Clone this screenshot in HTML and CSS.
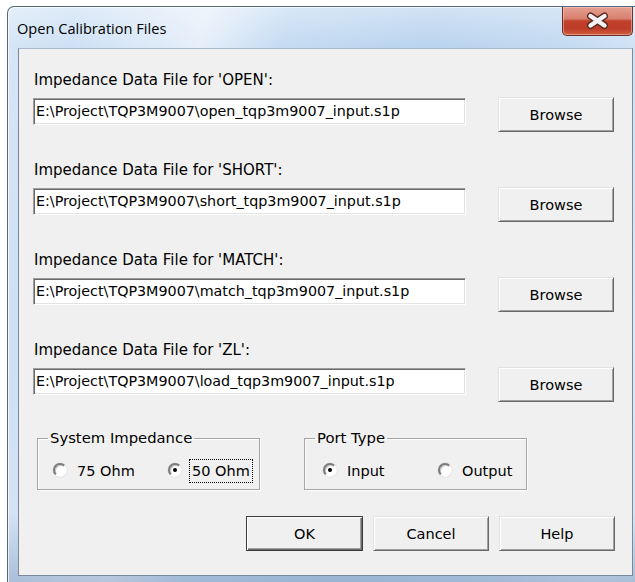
FILE: index.html
```html
<!DOCTYPE html>
<html lang="en">
<head>
<meta charset="utf-8">
<title>Open Calibration Files</title>
<link rel="stylesheet" href="styles.css">
</head>
<body>
<div class="window">
  <div class="titlebar">
    <span class="title">Open Calibration Files</span>
    <button class="close" type="button" aria-label="Close">
      <svg width="71" height="29" viewBox="0 0 71 29">
        <path d="M28.5 10 L42.5 19.5 M42.5 10 L28.5 19.5" stroke="#5a2a24" stroke-width="7" stroke-linecap="round" fill="none"/>
        <path d="M28.5 10 L42.5 19.5 M42.5 10 L28.5 19.5" stroke="#f2f2f2" stroke-width="4.4" stroke-linecap="round" fill="none"/>
      </svg>
    </button>
  </div>

  <div class="client">
    <div class="files">
      <div class="file-row">
        <div class="file-label">Impedance Data File for 'OPEN':</div>
        <div class="file-controls">
          <div class="textbox">E:\Project\TQP3M9007\open_tqp3m9007_input.s1p</div>
          <button class="btn btn-browse" type="button">Browse</button>
        </div>
      </div>
      <div class="file-row">
        <div class="file-label">Impedance Data File for 'SHORT':</div>
        <div class="file-controls">
          <div class="textbox">E:\Project\TQP3M9007\short_tqp3m9007_input.s1p</div>
          <button class="btn btn-browse" type="button">Browse</button>
        </div>
      </div>
      <div class="file-row">
        <div class="file-label">Impedance Data File for 'MATCH':</div>
        <div class="file-controls">
          <div class="textbox">E:\Project\TQP3M9007\match_tqp3m9007_input.s1p</div>
          <button class="btn btn-browse" type="button">Browse</button>
        </div>
      </div>
      <div class="file-row">
        <div class="file-label">Impedance Data File for 'ZL':</div>
        <div class="file-controls">
          <div class="textbox">E:\Project\TQP3M9007\load_tqp3m9007_input.s1p</div>
          <button class="btn btn-browse" type="button">Browse</button>
        </div>
      </div>
    </div>

    <div class="groups">
      <fieldset class="group group-impedance">
        <legend>System Impedance</legend>
        <div class="options">
          <div class="option"><span class="radio"></span><span class="option-text">75 Ohm</span></div>
          <div class="option"><span class="radio checked"></span><span class="option-text focused">50 Ohm</span></div>
        </div>
      </fieldset>
      <fieldset class="group group-port">
        <legend>Port Type</legend>
        <div class="options">
          <div class="option"><span class="radio checked"></span><span class="option-text">Input</span></div>
          <div class="option"><span class="radio"></span><span class="option-text">Output</span></div>
        </div>
      </fieldset>
    </div>

    <div class="actions">
      <button class="btn btn-default" type="button">OK</button>
      <button class="btn btn-action" type="button">Cancel</button>
      <button class="btn btn-action" type="button">Help</button>
    </div>
  </div>
</div>
</body>
</html>
```
FILE: styles.css
```css
html, body {
  margin: 0;
  padding: 0;
}

body {
  width: 635px;
  height: 582px;
  overflow: hidden;
  background: #ffffff;
  font-family: "DejaVu Sans", "Liberation Sans", sans-serif;
  color: #000;
}

/* Aero-style window frame */
.window {
  box-sizing: border-box;
  width: 640px;
  height: 576px;
  margin: 6px 0 0 7px;
  border: 1px solid #56687d;
  border-bottom: 0;
  border-radius: 7px 7px 0 0;
  display: flex;
  flex-direction: column;
  background:
    linear-gradient(180deg, rgba(255,255,255,0.35) 0px, rgba(255,255,255,0) 40px),
    linear-gradient(180deg, rgba(0,0,0,0) 88%, rgba(90,120,160,0.35) 100%),
    linear-gradient(100deg, #d6e6f6 0%, #cde0f4 9%, #e6effa 27%, #c4dbf2 38%, #b9d3ee 58%, #c3daf1 76%, #d9e8f8 92%, #d2e3f5 100%);
  box-shadow: inset 1px 1px 0 rgba(255,255,255,0.7);
}

.titlebar {
  height: 41px;
  flex: none;
  display: flex;
  align-items: flex-start;
}

.title {
  margin: 11px 0 0 9px;
  font-family: "Open Sans", "Noto Sans", sans-serif;
  font-size: 14.6px;
  line-height: 20px;
  color: #000;
}

.close {
  margin-left: auto;
  margin-right: 13px;
  width: 71px;
  height: 29px;
  padding: 0;
  box-sizing: border-box;
  border: 1px solid #6b2e26;
  border-top: 0;
  border-radius: 0 0 5px 5px;
  background: linear-gradient(180deg, #e3a091 0%, #d8806f 42%, #c0402b 50%, #bd3d28 78%, #d0603f 100%);
  box-shadow: inset 0 0 0 1px rgba(255,220,210,0.45);
  display: block;
}

.close svg {
  display: block;
  margin: -1px 0 0 -1px;
}

/* Dialog body */
.client {
  flex: none;
  box-sizing: border-box;
  width: 615px;
  height: 528px;
  margin-left: 10px;
  border: 1px solid #7b8a9b;
  border-top-color: #a8b9cb;
  background: #f0f0f0;
  font-size: 14.5px;
}

.files {
  display: flex;
  flex-direction: column;
  gap: 29px;
  padding-top: 22px;
}

.file-label {
  padding-left: 15px;
  line-height: 18px;
  height: 18px;
  font-size: 15px;
  white-space: nowrap;
}

.file-controls {
  display: flex;
  align-items: flex-start;
  margin-top: 8px;
}

.textbox {
  box-sizing: border-box;
  width: 433px;
  height: 27px;
  margin: 1px 0 0 14px;
  padding: 0 2px;
  border: 1px solid;
  border-color: #9d9d9d #ffffff #ffffff #9d9d9d;
  box-shadow: inset 1px 1px 0 #6a6a6a, inset -1px -1px 0 #e3e3e3;
  background: #fff;
  font-size: 14.3px;
  line-height: 24px;
  white-space: nowrap;
  overflow: hidden;
}

.btn {
  box-sizing: border-box;
  height: 35px;
  padding: 0;
  font-family: inherit;
  font-size: 14.5px;
  color: #000;
  background: #f0f0f0;
  border: 1px solid;
  border-color: #e3e3e3 #696969 #696969 #e3e3e3;
  box-shadow: inset 1px 1px 0 #ffffff, inset -1px -1px 0 #a0a0a0;
  border-radius: 0;
}

.btn-browse {
  width: 116px;
  margin-left: 32px;
}

/* Option groups */
.groups {
  display: flex;
  gap: 44px;
  margin-top: 27px;
  padding-left: 18px;
}

.group {
  box-sizing: border-box;
  width: 223px;
  margin: 0;
  padding: 12px 10px 6px 10px;
  border: 1px solid #a5a5a5;
  box-shadow: inset 1px 1px 0 #fff, 1px 1px 0 #fff;
  min-width: 0;
}

.group legend {
  padding: 0 2px;
  line-height: 18px;
  font-size: 14.8px;
}

.options {
  display: grid;
  grid-template-columns: 115px auto;
  padding-left: 5px;
}

.group-port .options {
  padding-left: 8px;
}

.option {
  display: flex;
  align-items: center;
}

.radio {
  box-sizing: border-box;
  width: 14px;
  height: 14px;
  margin: 0 7px 2px 0;
  border-radius: 50%;
  border: 2px solid;
  border-color: #7c7c7c #fcfcfc #fcfcfc #7c7c7c;
  background: #fff;
  box-shadow: inset 1px 1px 0 #c8c8c8, 0 0 0 0.5px #d8d8d8;
  display: flex;
  align-items: center;
  justify-content: center;
  flex: none;
}

.radio.checked::after {
  content: "";
  width: 4px;
  height: 4px;
  border-radius: 50%;
  background: #000;
}

.option-text {
  padding: 1px 2px;
  line-height: 20px;
  border: 1px dotted transparent;
  white-space: nowrap;
}

.option-text.focused {
  border-color: #000;
}

/* Dialog buttons */
.actions {
  display: flex;
  justify-content: flex-end;
  gap: 10px;
  margin-top: 26px;
  padding-right: 17px;
}

.btn-action {
  width: 116px;
}

.btn-default {
  width: 117px;
  border-color: #3c3c3c;
  box-shadow: inset 1px 1px 0 #ffffff, inset -1px -1px 0 #696969, inset -2px -2px 0 #a0a0a0;
}
```
